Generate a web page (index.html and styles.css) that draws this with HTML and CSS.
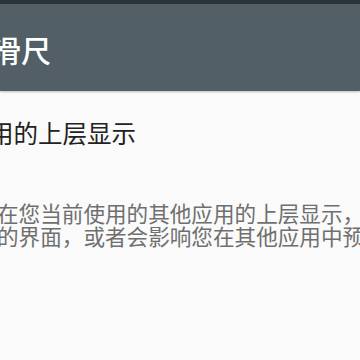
FILE: index.html
```html
<!DOCTYPE html>
<html lang="zh-CN">
<head>
<meta charset="utf-8">
<link rel="stylesheet" href="styles.css">
</head>
<body>
<div class="screen">
  <div class="status"></div>
  <header class="toolbar">
    <h1 class="title">滑尺</h1>
  </header>
  <main class="content">
    <p class="item-title">用的上层显示</p>
    <p class="desc">
      <span class="line">在您当前使用的其他应用的上层显示，</span>
      <span class="line">的界面，或者会影响您在其他应用中预</span>
    </p>
  </main>
</div>
</body>
</html>
```
FILE: styles.css
```css
html, body {
  margin: 0;
  padding: 0;
  width: 360px;
  height: 360px;
  overflow: hidden;
  background: #fafafa;
  font-family: "Noto Sans CJK SC", "Noto Sans", sans-serif;
}
.screen {
  width: 360px;
  height: 360px;
  overflow: hidden;
  display: flex;
  flex-direction: column;
}
.status {
  height: 4px;
  background: #2a3338;
  flex: none;
}
.toolbar {
  height: 87px;
  background: #525f66;
  flex: none;
  display: flex;
  align-items: center;
  box-shadow: 0 1px 2px rgba(0,0,0,0.25);
  position: relative;
  z-index: 1;
}
.title {
  margin: 2px 0 0 -9px;
  font-size: 30px;
  font-weight: 500;
  color: #ffffff;
  line-height: 1;
  white-space: nowrap;
}
.content {
  flex: 1;
  overflow: hidden;
}
.item-title {
  margin: 27px 0 0 -11px;
  font-size: 24.5px;
  line-height: 30px;
  color: #222222;
  white-space: nowrap;
}
.desc {
  margin: 53px 0 0 -3px;
  font-size: 21.6px;
  line-height: 23px;
  color: #6f6f6f;
}
.line {
  display: block;
  white-space: nowrap;
}
```
